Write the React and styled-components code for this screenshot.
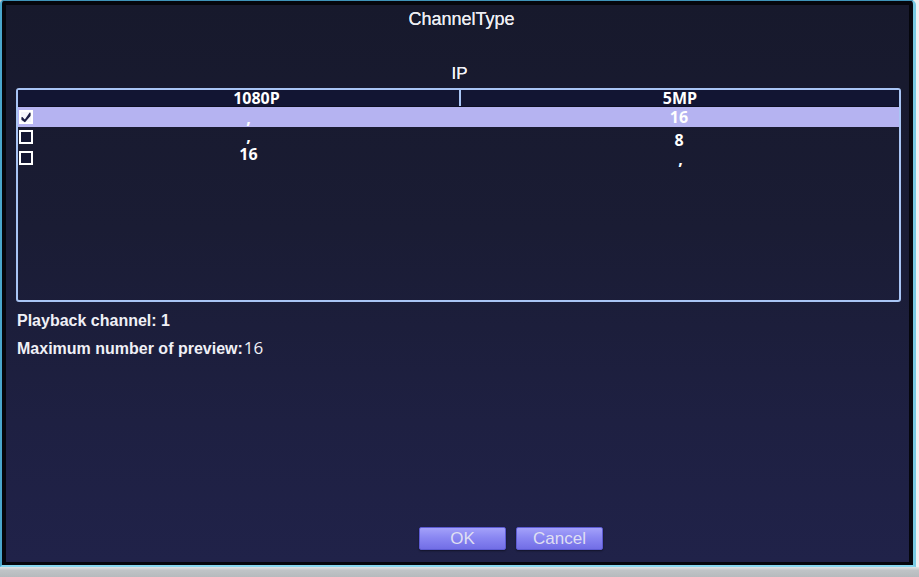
import React from 'react';
import styled, { createGlobalStyle } from 'styled-components';

const GlobalStyle = createGlobalStyle`
  html, body {
    margin: 0;
    padding: 0;
    background: #d6dade;
  }
  * {
    box-sizing: border-box;
  }
`;

const Page = styled.div`
  width: 919px;
  height: 577px;
  overflow: hidden;
  display: flex;
  flex-direction: column;
  background: linear-gradient(90deg, #c9cdd0 0%, #dfe2e4 60%, #eef0f1 100%);
`;

// the black bezel with its cyan rim
const Monitor = styled.div`
  width: 916px;
  height: 567px;
  flex: none;
  display: flex;
  padding: 4px 4px 3px 4px;
  background: #05060c;
  border-top: 1px solid #3f93b8;
  border-left: 2px solid #4aa6cc;
  border-right: 3px solid #78c9e2;
  border-bottom: 2px solid #86d6ee;
  border-radius: 4px 5px 0 0;
`;

const Panel = styled.div`
  flex: 1;
  display: flex;
  flex-direction: column;
  background: linear-gradient(180deg, #17192c 0%, #1a1c34 40%, #1e2042 75%, #202249 100%);
  font-family: 'Liberation Sans', Arial, sans-serif;
  color: #e8e8f0;
`;

const Title = styled.div`
  height: 28px;
  line-height: 28px;
  text-align: center;
  font-size: 18px;
  color: #ececf2;
  padding-left: 8px;
  text-shadow: 0 0 0.6px #ffffff;
`;

const GroupLabel = styled.div`
  margin-top: 32px;
  height: 18px;
  line-height: 18px;
  text-align: center;
  font-size: 17px;
  padding-left: 4px;
  color: #f2f2f8;
  text-shadow: 0 0 0.6px #ffffff;
`;

const Table = styled.div`
  margin: 5px 8px 0 10px;
  height: 214px;
  border: 2px solid #a9c5f5;
  border-radius: 3px;
  display: flex;
  flex-direction: column;
  font-family: 'Open Sans', 'DejaVu Sans', sans-serif;
  font-weight: 700;
  font-size: 16px;
  color: #ffffff;
`;

const HeaderRow = styled.div`
  height: 17px;
  display: grid;
  grid-template-columns: 441px 2px 1fr;
  background: #121533;
  border-bottom: 1px solid #0c0e22;
`;

const HeaderCell = styled.div`
  display: flex;
  justify-content: center;
  align-items: center;
  line-height: 15px;
  padding-left: ${(p) => p.$indent || 0}px;
`;

const HeaderDivider = styled.div`
  background: #a9c5f5;
`;

const Row = styled.div`
  height: 20px;
  display: grid;
  grid-template-columns: 20px 421px 1fr;
  align-items: center;
  background: ${(p) => (p.$selected ? '#b5b3f1' : 'transparent')};
`;

const CheckCell = styled.div`
  display: flex;
  align-items: center;
  padding-left: 1px;
  height: 100%;
`;

const Cell = styled.div`
  height: 100%;
  display: flex;
  justify-content: center;
  align-items: ${(p) => p.$align || 'center'};
  line-height: 14px;
  padding-top: ${(p) => p.$top || 0}px;
  padding-bottom: ${(p) => p.$bottom || 0}px;
  padding-left: ${(p) => p.$left || 0}px;
`;

const InfoBlock = styled.div`
  margin-top: 5px;
  padding-left: 11px;
  display: flex;
  flex-direction: column;
`;

const InfoLine = styled.div`
  height: 27px;
  line-height: 27px;
  font-size: 16px;
  font-weight: 700;
  color: #f0f0f6;
`;

const InfoValue = styled.span`
  font-family: 'Open Sans', 'DejaVu Sans', sans-serif;
  font-weight: 400;
  font-size: 17px;
  margin-left: 1px;
`;

const Footer = styled.div`
  margin-top: auto;
  padding: 0 0 12px 413px;
  display: flex;
  gap: 10px;
`;

const Button = styled.button`
  width: 87px;
  height: 23px;
  padding: 0;
  border: 1px solid #5d5bd2;
  border-radius: 2px;
  background: linear-gradient(180deg, #a3a1fa 0%, #8a87f2 45%, #726ee6 100%);
  color: #dfdff2;
  font-family: 'Liberation Sans', Arial, sans-serif;
  font-size: 17px;
  line-height: 21px;
  box-shadow: 0 1px 2px rgba(0, 0, 0, 0.45);
`;

const BottomStrip = styled.div`
  flex: 1;
  background: linear-gradient(180deg, #dfe3e5 0%, #bfc3c6 35%, #b6babd 100%);
`;

const CheckBox = ({ checked }) => (
  <svg width="14" height="14" viewBox="0 0 14 14">
    <rect
      x="1"
      y="1"
      width="12"
      height="12"
      fill={checked ? '#f4f4fb' : '#141733'}
      stroke="#ffffff"
      strokeWidth="2"
    />
    {checked && (
      <path d="M3 7.5 L5.8 10.5 L11 3.2 L11 5.5 L5.8 11.5 L3 9.5 Z" fill="#1b1c44" stroke="#1b1c44" strokeWidth="1.2" strokeLinejoin="round" />
    )}
  </svg>
);

const rows = [
  { checked: true, left: ',', leftAlign: 'flex-end', leftBottom: 2, right: '16' },
  { checked: false, left: ',', leftAlign: 'flex-start', leftTop: 2, right: '8', rightTop: 6 },
  { checked: false, left: '16', leftBottom: 8, right: ',', rightAlign: 'flex-end', rightBottom: 3, rightLeft: 3 },
];

const App = () => {
  return (
    <>
      <GlobalStyle />
      <Page>
        <Monitor>
          <Panel>
            <Title>ChannelType</Title>
            <GroupLabel>IP</GroupLabel>
            <Table>
              <HeaderRow>
                <HeaderCell $indent={36}>1080P</HeaderCell>
                <HeaderDivider />
                <HeaderCell>5MP</HeaderCell>
              </HeaderRow>
              {rows.map((r, i) => (
                <Row key={i} $selected={i === 0}>
                  <CheckCell>
                    <CheckBox checked={r.checked} />
                  </CheckCell>
                  <Cell $align={r.leftAlign} $top={r.leftTop} $bottom={r.leftBottom}>
                    {r.left}
                  </Cell>
                  <Cell
                    $align={r.rightAlign}
                    $top={r.rightTop}
                    $bottom={r.rightBottom}
                    $left={r.rightLeft}
                  >
                    {r.right}
                  </Cell>
                </Row>
              ))}
            </Table>
            <InfoBlock>
              <InfoLine>Playback channel: 1</InfoLine>
              <InfoLine>
                Maximum number of preview:<InfoValue>16</InfoValue>
              </InfoLine>
            </InfoBlock>
            <Footer>
              <Button>OK</Button>
              <Button>Cancel</Button>
            </Footer>
          </Panel>
        </Monitor>
        <BottomStrip />
      </Page>
    </>
  );
};

export default App;
